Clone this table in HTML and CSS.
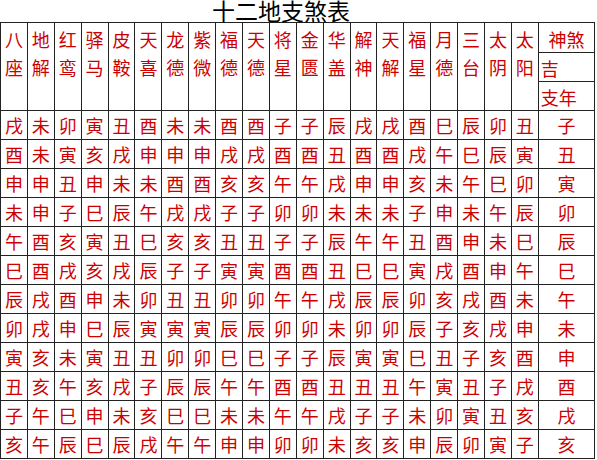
FILE: index.html
```html
<!DOCTYPE html>
<html lang="zh-CN">
<head>
<meta charset="utf-8">
<title>十二地支煞表</title>
<link rel="stylesheet" href="styles.css">
</head>
<body>
<div class="title">十二地支煞表</div>
<table class="sha">
<colgroup><col class="c" span="20"><col class="last"></colgroup>
<thead>
<tr class="h1">
<th rowspan="3">八<br>座</th><th rowspan="3">地<br>解</th><th rowspan="3">红<br>鸾</th><th rowspan="3">驿<br>马</th><th rowspan="3">皮<br>鞍</th><th rowspan="3">天<br>喜</th><th rowspan="3">龙<br>德</th><th rowspan="3">紫<br>微</th><th rowspan="3">福<br>德</th><th rowspan="3">天<br>德</th><th rowspan="3">将<br>星</th><th rowspan="3">金<br>匮</th><th rowspan="3">华<br>盖</th><th rowspan="3">解<br>神</th><th rowspan="3">天<br>解</th><th rowspan="3">福<br>星</th><th rowspan="3">月<br>德</th><th rowspan="3">三<br>台</th><th rowspan="3">太<br>阴</th><th rowspan="3">太<br>阳</th>
<th class="label">神煞</th>
</tr>
<tr class="h2"><th class="side">吉</th></tr>
<tr class="h3"><th class="side">支年</th></tr>
</thead>
<tbody>
<tr><td>戌</td><td>未</td><td>卯</td><td>寅</td><td>丑</td><td>酉</td><td>未</td><td>未</td><td>酉</td><td>酉</td><td>子</td><td>子</td><td>辰</td><td>戌</td><td>戌</td><td>酉</td><td>巳</td><td>辰</td><td>卯</td><td>丑</td><td>子</td></tr>
<tr><td>酉</td><td>未</td><td>寅</td><td>亥</td><td>戌</td><td>申</td><td>申</td><td>申</td><td>戌</td><td>戌</td><td>酉</td><td>酉</td><td>丑</td><td>酉</td><td>酉</td><td>戌</td><td>午</td><td>巳</td><td>辰</td><td>寅</td><td>丑</td></tr>
<tr><td>申</td><td>申</td><td>丑</td><td>申</td><td>未</td><td>未</td><td>酉</td><td>酉</td><td>亥</td><td>亥</td><td>午</td><td>午</td><td>戌</td><td>申</td><td>申</td><td>亥</td><td>未</td><td>午</td><td>巳</td><td>卯</td><td>寅</td></tr>
<tr><td>未</td><td>申</td><td>子</td><td>巳</td><td>辰</td><td>午</td><td>戌</td><td>戌</td><td>子</td><td>子</td><td>卯</td><td>卯</td><td>未</td><td>未</td><td>未</td><td>子</td><td>申</td><td>未</td><td>午</td><td>辰</td><td>卯</td></tr>
<tr><td>午</td><td>酉</td><td>亥</td><td>寅</td><td>丑</td><td>巳</td><td>亥</td><td>亥</td><td>丑</td><td>丑</td><td>子</td><td>子</td><td>辰</td><td>午</td><td>午</td><td>丑</td><td>酉</td><td>申</td><td>未</td><td>巳</td><td>辰</td></tr>
<tr><td>巳</td><td>酉</td><td>戌</td><td>亥</td><td>戌</td><td>辰</td><td>子</td><td>子</td><td>寅</td><td>寅</td><td>酉</td><td>酉</td><td>丑</td><td>巳</td><td>巳</td><td>寅</td><td>戌</td><td>酉</td><td>申</td><td>午</td><td>巳</td></tr>
<tr><td>辰</td><td>戌</td><td>酉</td><td>申</td><td>未</td><td>卯</td><td>丑</td><td>丑</td><td>卯</td><td>卯</td><td>午</td><td>午</td><td>戌</td><td>辰</td><td>辰</td><td>卯</td><td>亥</td><td>戌</td><td>酉</td><td>未</td><td>午</td></tr>
<tr><td>卯</td><td>戌</td><td>申</td><td>巳</td><td>辰</td><td>寅</td><td>寅</td><td>寅</td><td>辰</td><td>辰</td><td>卯</td><td>卯</td><td>未</td><td>卯</td><td>卯</td><td>辰</td><td>子</td><td>亥</td><td>戌</td><td>申</td><td>未</td></tr>
<tr><td>寅</td><td>亥</td><td>未</td><td>寅</td><td>丑</td><td>丑</td><td>卯</td><td>卯</td><td>巳</td><td>巳</td><td>子</td><td>子</td><td>辰</td><td>寅</td><td>寅</td><td>巳</td><td>丑</td><td>子</td><td>亥</td><td>酉</td><td>申</td></tr>
<tr><td>丑</td><td>亥</td><td>午</td><td>亥</td><td>戌</td><td>子</td><td>辰</td><td>辰</td><td>午</td><td>午</td><td>酉</td><td>酉</td><td>丑</td><td>丑</td><td>丑</td><td>午</td><td>寅</td><td>丑</td><td>子</td><td>戌</td><td>酉</td></tr>
<tr><td>子</td><td>午</td><td>巳</td><td>申</td><td>未</td><td>亥</td><td>巳</td><td>巳</td><td>未</td><td>未</td><td>午</td><td>午</td><td>戌</td><td>子</td><td>子</td><td>未</td><td>卯</td><td>寅</td><td>丑</td><td>亥</td><td>戌</td></tr>
<tr><td>亥</td><td>午</td><td>辰</td><td>巳</td><td>辰</td><td>戌</td><td>午</td><td>午</td><td>申</td><td>申</td><td>卯</td><td>卯</td><td>未</td><td>亥</td><td>亥</td><td>申</td><td>辰</td><td>卯</td><td>寅</td><td>子</td><td>亥</td></tr>
</tbody>
</table>
</body>
</html>
```

FILE: styles.css
```css
html, body {
  margin: 0;
  padding: 0;
  background: #fff;
}
body {
  font-family: "Noto Sans CJK SC", "Noto Sans", sans-serif;
}
.title {
  height: 22px;
  line-height: 21px;
  font-size: 23px;
  color: #000;
  padding-left: 212px;
  white-space: nowrap;
}
.sha {
  border-collapse: collapse;
  table-layout: fixed;
  width: 595px;
}
.sha col.c {
  width: 26.9px;
}
.sha th,
.sha td {
  border: 1px solid #222;
  padding: 0;
  color: #cc0000;
  font-weight: normal;
  font-size: 18px;
}
.sha .h1 { height: 30px; }
.sha .h2,
.sha .h3 { height: 29px; }
.sha thead th[rowspan] {
  vertical-align: top;
  text-align: center;
  line-height: 28px;
  padding-top: 2px;
}
.sha .label {
  text-align: center;
  vertical-align: middle;
  line-height: 20px;
  padding-top: 3px;
}
.sha .side {
  text-align: left;
  vertical-align: middle;
  line-height: 20px;
  padding-left: 2px;
  padding-top: 2px;
}
.sha tbody tr {
  height: 29px;
}
.sha td {
  text-align: center;
  vertical-align: middle;
  line-height: 20px;
}
```
